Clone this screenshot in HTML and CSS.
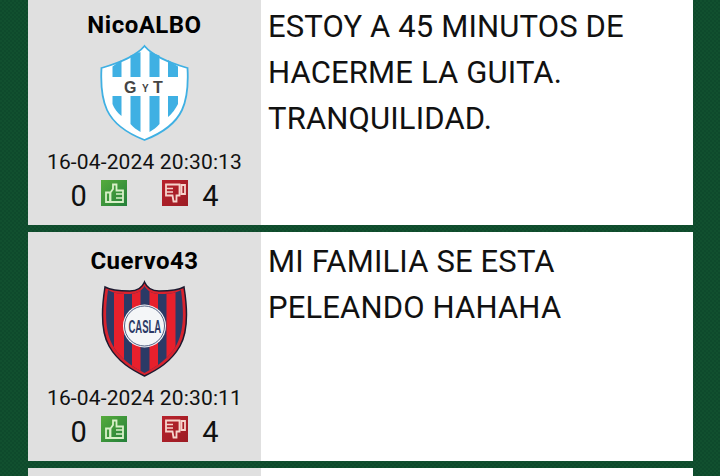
FILE: index.html
```html
<!DOCTYPE html>
<html lang="es">
<head>
<meta charset="utf-8">
<title>Comentarios</title>
<link rel="stylesheet" href="styles.css">
</head>
<body>
<svg class="defs" width="0" height="0">
  <defs>
    <linearGradient id="up-bg" x1="0" y1="0" x2="1" y2="1"><stop offset="0" stop-color="#56ab3c"/><stop offset="1" stop-color="#24803a"/></linearGradient>
    <linearGradient id="down-bg" x1="0" y1="0" x2="1" y2="1"><stop offset="0" stop-color="#b8222c"/><stop offset="1" stop-color="#9c1c24"/></linearGradient>
    <symbol id="thumb-up" viewBox="0 0 26 26">
      <rect width="26" height="26" fill="url(#up-bg)"/>
      <path d="M5 12.500H9V22H5ZM9.500 12.500L12 9V4.500H15.500V10.500H22V22H9.500Z" fill="none" stroke="#d8f0c8" stroke-width="1.800"/>
      <path d="M15 14H22M15 18H22" stroke="#d8f0c8" stroke-width="1.400"/>
    </symbol>
    <symbol id="thumb-down" viewBox="0 0 26 26">
      <rect width="26" height="26" fill="url(#down-bg)"/>
      <path d="M4 4.500H17.500V15.500H14.500V21.500H11.500L10.500 15.500H4ZM19.500 5H23V14H19.500Z" fill="none" stroke="#f6d4cc" stroke-width="1.800"/>
      <path d="M4 8.500H11M4 12H11" stroke="#f6d4cc" stroke-width="1.400"/>
    </symbol>
  </defs>
</svg>
<main class="list">
  <article class="post">
    <aside class="user">
      <h2 class="name">NicoALBO</h2>
      <svg class="crest" width="90" height="98" viewBox="0 0 90 98">
        <path d="M44.500 2C36 12 22 18 1.500 24C0.500 42 2 55 7 66C14 81 29 90 44.500 96C60 90 75 81 82 66C87 55 88.500 42 87.500 24C67 18 53 12 44.500 2Z" fill="#fff" stroke="#3fb0e3" stroke-width="1.800"/>
        <g fill="#3fb0e3">
          <path d="M12.500 22.500L21.500 16V33H12.500Z"/><path d="M30.500 11.500L40.500 8V33H30.500Z"/><path d="M49.500 8L59.500 11.500V33H49.500Z"/><path d="M68 16L78 22.500V33H68Z"/>
          <path d="M12.500 52H21.500V72C17.500 69 14 64 12.500 60Z"/><path d="M30.500 52H40.500V88C37 86 33 83 30.500 80Z"/><path d="M49.500 52H59.500V80C57 83 53 86 49.500 88Z"/><path d="M68 52H78V60C76 64 72 70 68 73Z"/>
        </g>
        <text class="crest-big" x="24" y="48.500">G</text>
        <text class="crest-small" x="42" y="47.500">Y</text>
        <text class="crest-big" x="53" y="48.500">T</text>
      </svg>
      <time class="date">16-04-2024 20:30:13</time>
      <div class="votes">
        <span class="count">0</span>
        <svg class="thumb" width="26" height="26"><use href="#thumb-up"/></svg>
        <svg class="thumb" width="26" height="26"><use href="#thumb-down"/></svg>
        <span class="count">4</span>
      </div>
    </aside>
    <p class="message">ESTOY A 45 MINUTOS DE HACERME LA GUITA. TRANQUILIDAD.</p>
  </article>
  <article class="post">
    <aside class="user">
      <h2 class="name">Cuervo43</h2>
      <svg class="crest" width="90" height="98" viewBox="0 0 90 98">
        <defs><clipPath id="casla"><path d="M44.500 6C42 11 36 14 30 14C23 14 14 14 8 10C5 32 5 50 12 64C19 78 33 87 44.500 93C56 87 70 78 77 64C84 50 84 32 81 10C75 14 66 14 59 14C53 14 47 11 44.500 6Z"/></clipPath></defs>
        <path d="M44.500 2C42 8 36 11 30 11C22 11 12 11 5 7C1 32 1 52 9 66C18 82 32 90 44.500 96C57 90 71 82 80 66C88 52 88 32 84 7C77 11 67 11 59 11C53 11 47 8 44.500 2Z" fill="#d8232e" stroke="#1c1a30" stroke-width="1.500"/>
        <g clip-path="url(#casla)">
          <rect width="90" height="98" fill="#2b3a66"/>
          <path d="M14 0H24V98H14ZM32 0H40.500V98H32ZM49.500 0H58V98H49.500ZM66.500 0H75.500V98H66.500Z" fill="#e8202c"/>
        </g>
        <circle cx="44.500" cy="46" r="21.500" fill="#f4f6f8"/>
        <circle cx="44.500" cy="46" r="20" fill="none" stroke="#2b3a66" stroke-width="0.800"/>
        <text class="crest-casla" transform="translate(28.500 53) scale(0.500 1)">CASLA</text>
      </svg>
      <time class="date">16-04-2024 20:30:11</time>
      <div class="votes">
        <span class="count">0</span>
        <svg class="thumb" width="26" height="26"><use href="#thumb-up"/></svg>
        <svg class="thumb" width="26" height="26"><use href="#thumb-down"/></svg>
        <span class="count">4</span>
      </div>
    </aside>
    <p class="message">MI FAMILIA SE ESTA PELEANDO HAHAHA</p>
  </article>
  <article class="post"><aside class="user"></aside><p class="message"></p></article>
</main>
</body>
</html>
```
FILE: styles.css
```css
html, body { margin: 0; height: 100%; }
body {
  background: repeating-conic-gradient(#0e4a2c 0 25%, #11502f 0 50%) 0 0 / 4px 4px;
  overflow: hidden;
  font-family: Roboto, "Liberation Sans", sans-serif;
  color: #111;
}
.defs { position: absolute; }
.list {
  display: flex;
  flex-direction: column;
  gap: 7px;
  margin: -4px 27px 0 28px;
}
.post {
  display: flex;
  height: 229px;
  flex: none;
  background: #fff;
}
.user {
  width: 233px;
  flex: none;
  background: #e0e0e0;
  display: flex;
  flex-direction: column;
  align-items: center;
}
.name {
  margin: 15px 0 0;
  font-size: 24px;
  line-height: 28px;
  font-weight: 700;
  letter-spacing: 0.500px;
  color: #000;
}
.crest { margin-top: 5px; display: block; }
.date {
  margin-top: 7px;
  font-size: 21px;
  line-height: 26px;
  letter-spacing: 0.150px;
}
.votes {
  display: flex;
  align-items: flex-start;
  margin-top: 4px;
  width: 148px;
  height: 34px;
}
.count { font-size: 29px; line-height: 34px; width: 22px; }
.votes .count:last-child { text-align: right; }
.thumb { margin: 1px 8.500px 0; }
.thumb + .thumb { margin-left: 26.500px; }
.message {
  margin: 0;
  padding: 7px;
  font-size: 31px;
  line-height: 46px;
  letter-spacing: 0.150px;
  flex: 1;
  color: #111;
}
.post:first-child .message { padding-top: 8px; }
.crest-big { font: 700 16px "Liberation Sans", sans-serif; fill: #444; }
.crest-small { font: 700 10px "Liberation Sans", sans-serif; fill: #444; }
.crest-casla { font: 700 19px "Liberation Sans", sans-serif; fill: #2b3a66; }
```
